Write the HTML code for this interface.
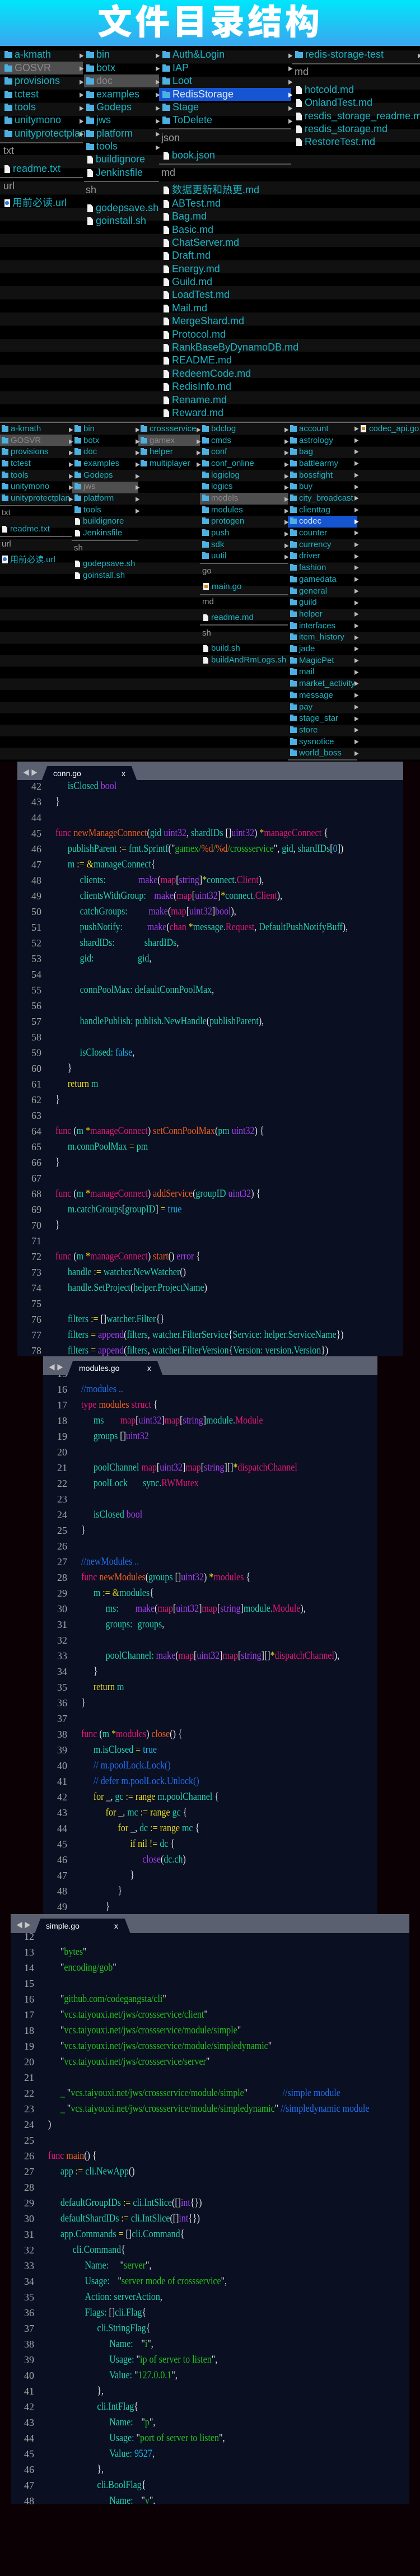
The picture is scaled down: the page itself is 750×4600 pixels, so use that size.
<!DOCTYPE html>
<html><head><meta charset="utf-8">
<style>
*{margin:0;padding:0;box-sizing:border-box}
body{width:750px;height:4600px;background:#0b0003;position:relative;overflow:hidden;font-family:"Liberation Sans","Noto Sans CJK SC",sans-serif}
.title{position:absolute;left:0;top:0;width:750px;height:82px;background:linear-gradient(#00e6fc,#3aa6ee);text-align:center;color:#fff;font:900 62px/82px "Liberation Sans","Noto Sans CJK SC",sans-serif;letter-spacing:5px}
.sec{position:absolute;left:0;width:750px;background:#000;overflow:hidden}
.stripe{position:absolute;left:0;width:750px}
.it{position:absolute;white-space:nowrap;color:#19b3c4}
.s1 .it{height:23px;line-height:23px;font-size:18px}
.s2 .it{height:20px;line-height:20px;font-size:15px}
.hd{color:#9a9a9a !important}
.fd{display:inline-block;width:14px;height:11px;background:#4eb0e0;margin-right:4px;vertical-align:-1px;position:relative}
.fd:before{content:"";position:absolute;left:0;top:-2px;width:6px;height:2px;background:#4eb0e0}
.s2 .fd{width:12px;height:10px}
.fi{display:inline-block;width:10px;height:14px;background:#f2f2f2;margin-right:5px;vertical-align:-2px;clip-path:polygon(0 0,65% 0,100% 30%,100% 100%,0 100%)}
.s2 .fi{width:9px;height:12px}
.ur{display:inline-block;width:10px;height:14px;background:#f2f2f2;margin-right:4px;vertical-align:-2px;position:relative}
.ur:after{content:"";position:absolute;left:1px;top:3px;width:7px;height:7px;border-radius:50%;background:#2a7ae0}
.go{display:inline-block;width:10px;height:13px;background:#f2f2f2;margin-right:5px;vertical-align:-2px;position:relative}
.go:after{content:"";position:absolute;left:2px;top:4px;width:6px;height:5px;background:#d08a20}
.ar{position:absolute;color:#bbb;font-size:9px}
.sep{position:absolute;height:2px;background:#5a5a5a}
.sel{position:absolute;background:#4e4e4e}
.selb{position:absolute;background:#1655d2}
.ed{position:absolute;background:#0a0f22;overflow:hidden}
.tb{position:absolute;left:0;top:0;width:100%;background:#5b6071;z-index:3}
.tab{position:absolute;left:43px;top:8px;width:171px;height:27px;background:#0a0f22;clip-path:polygon(6% 0,94% 0,100% 100%,0 100%)}
.tabt{position:absolute;top:11px;color:#fff;font:14px/20px "Liberation Sans",sans-serif;z-index:4}
.nav{position:absolute;left:10px;top:11px;color:#c8c8c8;font-size:12px;letter-spacing:2px;z-index:4}
.ln{position:absolute;text-align:right;color:#a4a4a4;font:18px/28px "Liberation Serif",serif}
.ln div{height:28px}
.code{position:absolute;width:1100px;transform:scaleX(.84);transform-origin:0 0;font:19px/28px "Liberation Serif",serif;color:#22d3b0;white-space:normal}
.code div{height:28px;white-space:pre}
.i1{padding-left:26px}.i2{padding-left:52px}.i3{padding-left:78px}.i4{padding-left:104px}.i5{padding-left:130px}
.kw{display:inline-block}
.k{color:#e8177c}.f{color:#f25f1c}.t{color:#a63ef2}.v{color:#22d3b0}.y{color:#e6dc1e}.s{color:#24c41c}.c{color:#1f6ff0}.w{color:#e2e2e2}.n{color:#1ab6ee}
</style></head><body>

<div class="title">文件目录结构</div>

<!-- SECTION 1 -->
<div class="sec s1" style="top:82px;height:672px;border-top:4px solid #000">
<div class="stripe" style="top:4px;height:668px;background:repeating-linear-gradient(#111 0 23.4px,#000 23.4px 46.8px)"></div>
</div>
<div class="s1">
<div class="sel" style="left:0;top:110px;width:148px;height:23px"></div>
<div class="sel" style="left:150px;top:133px;width:134px;height:23px"></div>
<div class="selb" style="left:284px;top:157px;width:236px;height:23px"></div>

<div class="it" style="left:8px;top:86px"><i class="fd"></i>a-kmath</div>
<div class="it" style="left:8px;top:110px;color:#8a8a8a"><i class="fd"></i>GOSVR</div>
<div class="it" style="left:8px;top:133px"><i class="fd"></i>provisions</div>
<div class="it" style="left:8px;top:157px"><i class="fd"></i>tctest</div>
<div class="it" style="left:8px;top:180px"><i class="fd"></i>tools</div>
<div class="it" style="left:8px;top:203px"><i class="fd"></i>unitymono</div>
<div class="it" style="left:8px;top:227px"><i class="fd"></i>unityprotectplan</div>
<div class="sep" style="left:0;top:254px;width:148px"></div>
<div class="it hd" style="left:6px;top:258px">txt</div>
<div class="it" style="left:8px;top:290px"><i class="fi"></i>readme.txt</div>
<div class="sep" style="left:0;top:316px;width:148px"></div>
<div class="it hd" style="left:6px;top:321px">url</div>
<div class="it" style="left:8px;top:351px"><i class="ur"></i>用前必读.url</div>
<div class="ar" style="left:141px;top:93px">▶</div><div class="ar" style="left:141px;top:116px">▶</div><div class="ar" style="left:141px;top:140px">▶</div><div class="ar" style="left:141px;top:163px">▶</div><div class="ar" style="left:141px;top:187px">▶</div><div class="ar" style="left:141px;top:210px">▶</div><div class="ar" style="left:141px;top:233px">▶</div>

<div class="it" style="left:154px;top:86px"><i class="fd"></i>bin</div>
<div class="it" style="left:154px;top:110px"><i class="fd"></i>botx</div>
<div class="it" style="left:154px;top:133px;color:#8a8a8a"><i class="fd"></i>doc</div>
<div class="it" style="left:154px;top:157px"><i class="fd"></i>examples</div>
<div class="it" style="left:154px;top:180px"><i class="fd"></i>Godeps</div>
<div class="it" style="left:154px;top:203px"><i class="fd"></i>jws</div>
<div class="it" style="left:154px;top:227px"><i class="fd"></i>platform</div>
<div class="it" style="left:154px;top:250px"><i class="fd"></i>tools</div>
<div class="it" style="left:156px;top:273px"><i class="fi"></i>buildignore</div>
<div class="it" style="left:156px;top:297px"><i class="fi"></i>Jenkinsfile</div>
<div class="sep" style="left:150px;top:323px;width:134px"></div>
<div class="it hd" style="left:153px;top:328px">sh</div>
<div class="it" style="left:156px;top:360px"><i class="fi"></i>godepsave.sh</div>
<div class="it" style="left:156px;top:383px"><i class="fi"></i>goinstall.sh</div>
<div class="ar" style="left:277px;top:93px">▶</div><div class="ar" style="left:277px;top:116px">▶</div><div class="ar" style="left:277px;top:140px">▶</div><div class="ar" style="left:277px;top:163px">▶</div><div class="ar" style="left:277px;top:187px">▶</div><div class="ar" style="left:277px;top:210px">▶</div><div class="ar" style="left:277px;top:233px">▶</div><div class="ar" style="left:277px;top:257px">▶</div>

<div class="it" style="left:290px;top:86px"><i class="fd"></i>Auth&amp;Login</div>
<div class="it" style="left:290px;top:110px"><i class="fd"></i>IAP</div>
<div class="it" style="left:290px;top:133px"><i class="fd"></i>Loot</div>
<div class="it" style="left:290px;top:157px;color:#dceaf2"><i class="fd"></i>RedisStorage</div>
<div class="it" style="left:290px;top:180px"><i class="fd"></i>Stage</div>
<div class="it" style="left:290px;top:203px"><i class="fd"></i>ToDelete</div>
<div class="sep" style="left:284px;top:229px;width:236px"></div>
<div class="it hd" style="left:288px;top:235px">json</div>
<div class="it" style="left:292px;top:266px"><i class="fi"></i>book.json</div>
<div class="sep" style="left:284px;top:292px;width:236px"></div>
<div class="it hd" style="left:288px;top:297px">md</div>
<div class="it" style="left:292px;top:328px"><i class="fi"></i>数据更新和热更.md</div>
<div class="it" style="left:292px;top:352px"><i class="fi"></i>ABTest.md</div>
<div class="it" style="left:292px;top:375px"><i class="fi"></i>Bag.md</div>
<div class="it" style="left:292px;top:399px"><i class="fi"></i>Basic.md</div>
<div class="it" style="left:292px;top:422px"><i class="fi"></i>ChatServer.md</div>
<div class="it" style="left:292px;top:445px"><i class="fi"></i>Draft.md</div>
<div class="it" style="left:292px;top:469px"><i class="fi"></i>Energy.md</div>
<div class="it" style="left:292px;top:492px"><i class="fi"></i>Guild.md</div>
<div class="it" style="left:292px;top:515px"><i class="fi"></i>LoadTest.md</div>
<div class="it" style="left:292px;top:539px"><i class="fi"></i>Mail.md</div>
<div class="it" style="left:292px;top:562px"><i class="fi"></i>MergeShard.md</div>
<div class="it" style="left:292px;top:586px"><i class="fi"></i>Protocol.md</div>
<div class="it" style="left:292px;top:609px"><i class="fi"></i>RankBaseByDynamoDB.md</div>
<div class="it" style="left:292px;top:632px"><i class="fi"></i>README.md</div>
<div class="it" style="left:292px;top:656px"><i class="fi"></i>RedeemCode.md</div>
<div class="it" style="left:292px;top:679px"><i class="fi"></i>RedisInfo.md</div>
<div class="it" style="left:292px;top:703px"><i class="fi"></i>Rename.md</div>
<div class="it" style="left:292px;top:726px"><i class="fi"></i>Reward.md</div>
<div class="ar" style="left:514px;top:93px">▶</div><div class="ar" style="left:514px;top:116px">▶</div><div class="ar" style="left:514px;top:140px">▶</div><div class="ar" style="left:514px;top:163px;color:#fff">▶</div><div class="ar" style="left:514px;top:187px">▶</div><div class="ar" style="left:514px;top:210px">▶</div>

<div class="it" style="left:527px;top:86px"><i class="fd"></i>redis-storage-test</div>
<div class="ar" style="left:745px;top:93px">▶</div>
<div class="sep" style="left:521px;top:113px;width:229px"></div>
<div class="it hd" style="left:526px;top:117px">md</div>
<div class="it" style="left:529px;top:149px"><i class="fi"></i>hotcold.md</div>
<div class="it" style="left:529px;top:172px"><i class="fi"></i>OnlandTest.md</div>
<div class="it" style="left:529px;top:196px"><i class="fi"></i>resdis_storage_readme.md</div>
<div class="it" style="left:529px;top:219px"><i class="fi"></i>resdis_storage.md</div>
<div class="it" style="left:529px;top:242px"><i class="fi"></i>RestoreTest.md</div>
</div>

<!-- SECTION 2 -->
<div class="sec s2" style="top:753px;height:607px;border-top:2px solid #6a6a6a">
<div class="stripe" style="top:1px;height:606px;background:repeating-linear-gradient(#111 0 20.7px,#000 20.7px 41.4px)"></div>
</div>
<div class="s2">
<div class="sel" style="left:0;top:776px;width:128px;height:21px"></div>
<div class="sel" style="left:247px;top:776px;width:110px;height:21px"></div>
<div class="sel" style="left:128px;top:860px;width:119px;height:21px"></div>
<div class="sel" style="left:357px;top:880px;width:157px;height:21px"></div>
<div class="selb" style="left:514px;top:921px;width:124px;height:21px"></div>

<div class="it" style="left:3px;top:756px"><i class="fd"></i>a-kmath</div>
<div class="it" style="left:3px;top:777px;color:#8a8a8a"><i class="fd"></i>GOSVR</div>
<div class="it" style="left:3px;top:797px"><i class="fd"></i>provisions</div>
<div class="it" style="left:3px;top:818px"><i class="fd"></i>tctest</div>
<div class="it" style="left:3px;top:839px"><i class="fd"></i>tools</div>
<div class="it" style="left:3px;top:859px"><i class="fd"></i>unitymono</div>
<div class="it" style="left:3px;top:880px"><i class="fd"></i>unityprotectplan</div>
<div class="sep" style="left:0;top:902px;width:128px"></div>
<div class="it hd" style="left:3px;top:906px">txt</div>
<div class="it" style="left:4px;top:935px"><i class="fi"></i>readme.txt</div>
<div class="sep" style="left:0;top:957px;width:128px"></div>
<div class="it hd" style="left:3px;top:962px">url</div>
<div class="it" style="left:4px;top:990px"><i class="ur"></i>用前必读.url</div>
<div class="ar" style="left:122px;top:761px">▶</div><div class="ar" style="left:122px;top:782px">▶</div><div class="ar" style="left:122px;top:802px">▶</div><div class="ar" style="left:122px;top:823px">▶</div><div class="ar" style="left:122px;top:844px">▶</div><div class="ar" style="left:122px;top:864px">▶</div><div class="ar" style="left:122px;top:885px">▶</div>

<div class="it" style="left:133px;top:756px"><i class="fd"></i>bin</div>
<div class="it" style="left:133px;top:777px"><i class="fd"></i>botx</div>
<div class="it" style="left:133px;top:797px"><i class="fd"></i>doc</div>
<div class="it" style="left:133px;top:818px"><i class="fd"></i>examples</div>
<div class="it" style="left:133px;top:839px"><i class="fd"></i>Godeps</div>
<div class="it" style="left:133px;top:859px;color:#8a8a8a"><i class="fd"></i>jws</div>
<div class="it" style="left:133px;top:880px"><i class="fd"></i>platform</div>
<div class="it" style="left:133px;top:901px"><i class="fd"></i>tools</div>
<div class="it" style="left:134px;top:921px"><i class="fi"></i>buildignore</div>
<div class="it" style="left:134px;top:942px"><i class="fi"></i>Jenkinsfile</div>
<div class="sep" style="left:128px;top:964px;width:119px"></div>
<div class="it hd" style="left:132px;top:969px">sh</div>
<div class="it" style="left:134px;top:997px"><i class="fi"></i>godepsave.sh</div>
<div class="it" style="left:134px;top:1018px"><i class="fi"></i>goinstall.sh</div>
<div class="ar" style="left:241px;top:761px">▶</div><div class="ar" style="left:241px;top:782px">▶</div><div class="ar" style="left:241px;top:802px">▶</div><div class="ar" style="left:241px;top:823px">▶</div><div class="ar" style="left:241px;top:844px">▶</div><div class="ar" style="left:241px;top:864px">▶</div><div class="ar" style="left:241px;top:885px">▶</div><div class="ar" style="left:241px;top:906px">▶</div>

<div class="it" style="left:251px;top:756px"><i class="fd"></i>crossservice</div>
<div class="it" style="left:251px;top:777px;color:#8a8a8a"><i class="fd"></i>gamex</div>
<div class="it" style="left:251px;top:797px"><i class="fd"></i>helper</div>
<div class="it" style="left:251px;top:818px"><i class="fd"></i>multiplayer</div>
<div class="ar" style="left:350px;top:761px">▶</div><div class="ar" style="left:350px;top:782px">▶</div><div class="ar" style="left:350px;top:802px">▶</div><div class="ar" style="left:350px;top:823px">▶</div>

<div class="it" style="left:361px;top:756px"><i class="fd"></i>bdclog</div>
<div class="it" style="left:361px;top:777px"><i class="fd"></i>cmds</div>
<div class="it" style="left:361px;top:797px"><i class="fd"></i>conf</div>
<div class="it" style="left:361px;top:818px"><i class="fd"></i>conf_online</div>
<div class="it" style="left:361px;top:839px"><i class="fd"></i>logiclog</div>
<div class="it" style="left:361px;top:859px"><i class="fd"></i>logics</div>
<div class="it" style="left:361px;top:880px;color:#8a8a8a"><i class="fd"></i>models</div>
<div class="it" style="left:361px;top:901px"><i class="fd"></i>modules</div>
<div class="it" style="left:361px;top:921px"><i class="fd"></i>protogen</div>
<div class="it" style="left:361px;top:942px"><i class="fd"></i>push</div>
<div class="it" style="left:361px;top:963px"><i class="fd"></i>sdk</div>
<div class="it" style="left:361px;top:983px"><i class="fd"></i>uutil</div>
<div class="sep" style="left:357px;top:1005px;width:157px"></div>
<div class="it hd" style="left:361px;top:1010px">go</div>
<div class="it" style="left:363px;top:1038px"><i class="go"></i>main.go</div>
<div class="sep" style="left:357px;top:1061px;width:157px"></div>
<div class="it hd" style="left:361px;top:1065px">md</div>
<div class="it" style="left:363px;top:1093px"><i class="fi"></i>readme.md</div>
<div class="sep" style="left:357px;top:1115px;width:157px"></div>
<div class="it hd" style="left:361px;top:1121px">sh</div>
<div class="it" style="left:363px;top:1148px"><i class="fi"></i>build.sh</div>
<div class="it" style="left:363px;top:1169px"><i class="fi"></i>buildAndRmLogs.sh</div>
<div class="ar" style="left:507px;top:761px">▶</div><div class="ar" style="left:507px;top:782px">▶</div><div class="ar" style="left:507px;top:802px">▶</div><div class="ar" style="left:507px;top:823px">▶</div><div class="ar" style="left:507px;top:844px">▶</div><div class="ar" style="left:507px;top:864px">▶</div><div class="ar" style="left:507px;top:885px">▶</div><div class="ar" style="left:507px;top:906px">▶</div><div class="ar" style="left:507px;top:926px">▶</div><div class="ar" style="left:507px;top:947px">▶</div><div class="ar" style="left:507px;top:968px">▶</div><div class="ar" style="left:507px;top:988px">▶</div>

<div class="it" style="left:518px;top:756px"><i class="fd"></i>account</div>
<div class="it" style="left:518px;top:777px"><i class="fd"></i>astrology</div>
<div class="it" style="left:518px;top:797px"><i class="fd"></i>bag</div>
<div class="it" style="left:518px;top:818px"><i class="fd"></i>battlearmy</div>
<div class="it" style="left:518px;top:839px"><i class="fd"></i>bossfight</div>
<div class="it" style="left:518px;top:859px"><i class="fd"></i>buy</div>
<div class="it" style="left:518px;top:880px"><i class="fd"></i>city_broadcast</div>
<div class="it" style="left:518px;top:901px"><i class="fd"></i>clienttag</div>
<div class="it" style="left:518px;top:921px;color:#dceaf2"><i class="fd"></i>codec</div>
<div class="it" style="left:518px;top:942px"><i class="fd"></i>counter</div>
<div class="it" style="left:518px;top:963px"><i class="fd"></i>currency</div>
<div class="it" style="left:518px;top:983px"><i class="fd"></i>driver</div>
<div class="it" style="left:518px;top:1004px"><i class="fd"></i>fashion</div>
<div class="it" style="left:518px;top:1025px"><i class="fd"></i>gamedata</div>
<div class="it" style="left:518px;top:1046px"><i class="fd"></i>general</div>
<div class="it" style="left:518px;top:1066px"><i class="fd"></i>guild</div>
<div class="it" style="left:518px;top:1087px"><i class="fd"></i>helper</div>
<div class="it" style="left:518px;top:1108px"><i class="fd"></i>interfaces</div>
<div class="it" style="left:518px;top:1128px"><i class="fd"></i>item_history</div>
<div class="it" style="left:518px;top:1149px"><i class="fd"></i>jade</div>
<div class="it" style="left:518px;top:1170px"><i class="fd"></i>MagicPet</div>
<div class="it" style="left:518px;top:1190px"><i class="fd"></i>mail</div>
<div class="it" style="left:518px;top:1211px"><i class="fd"></i>market_activity</div>
<div class="it" style="left:518px;top:1232px"><i class="fd"></i>message</div>
<div class="it" style="left:518px;top:1253px"><i class="fd"></i>pay</div>
<div class="it" style="left:518px;top:1273px"><i class="fd"></i>stage_star</div>
<div class="it" style="left:518px;top:1294px"><i class="fd"></i>store</div>
<div class="it" style="left:518px;top:1315px"><i class="fd"></i>sysnotice</div>
<div class="it" style="left:518px;top:1335px"><i class="fd"></i>world_boss</div>
<div class="sep" style="left:514px;top:1356px;width:124px"></div>
<div style="position:absolute;left:632px;top:756px;color:#bbb;font-size:9px;line-height:20.7px">▶<br>▶<br>▶<br>▶<br>▶<br>▶<br>▶<br>▶<br><span style="color:#fff">▶</span><br>▶<br>▶<br>▶<br>▶<br>▶<br>▶<br>▶<br>▶<br>▶<br>▶<br>▶<br>▶<br>▶<br>▶<br>▶<br>▶<br>▶<br>▶<br>▶<br>▶</div>

<div class="it" style="left:644px;top:756px"><i class="go"></i>codec_api.go</div>
</div>

<!-- EDITOR 1 -->
<div class="ed" style="left:31px;top:1360px;width:689px;height:1062px">
<div class="tb" style="height:33px"></div><div class="tab" style="z-index:3"></div>
<div class="nav">◀▶</div><div class="tabt" style="left:64px">conn.go</div><div class="tabt" style="left:186px">x</div>
<div class="ln" style="left:0;width:43px;top:30px"><div>42</div><div>43</div><div>44</div><div>45</div><div>46</div><div>47</div><div>48</div><div>49</div><div>50</div><div>51</div><div>52</div><div>53</div><div>54</div><div>55</div><div>56</div><div>57</div><div>58</div><div>59</div><div>60</div><div>61</div><div>62</div><div>63</div><div>64</div><div>65</div><div>66</div><div>67</div><div>68</div><div>69</div><div>70</div><div>71</div><div>72</div><div>73</div><div>74</div><div>75</div><div>76</div><div>77</div><div>78</div></div>
<div class="code" style="left:68px;top:30px">
<div class="i1">isClosed <span class="t">bool</span></div>
<div class="w">}</div>
<div></div>
<div><span class="k">func</span> <span class="f">newManageConnect</span><span class="w">(</span>gid <span class="t">uint32</span><span class="w">,</span> shardIDs <span class="w">[]</span><span class="t">uint32</span><span class="w">)</span> <span class="y">*</span><span class="k">manageConnect</span> <span class="w">{</span></div>
<div class="i1">publishParent <span class="y">:=</span> fmt.Sprintf<span class="w">("</span><span class="s">gamex/</span><span class="f">%d</span><span class="s">/</span><span class="f">%d</span><span class="s">/crossservice</span><span class="w">"</span><span class="w">,</span> gid<span class="w">,</span> shardIDs<span class="w">[</span><span class="n">0</span><span class="w">])</span></div>
<div class="i1">m <span class="y">:= &amp;</span>manageConnect<span class="w">{</span></div>
<div class="i2"><span class="kw" style="width:124px">clients:</span><span class="t">make</span><span class="w">(</span><span class="k">map</span><span class="w">[</span><span class="t">string</span><span class="w">]</span><span class="y">*</span>connect.<span class="k">Client</span><span class="w">),</span></div>
<div class="i2"><span class="kw" style="width:158px">clientsWithGroup:</span><span class="t">make</span><span class="w">(</span><span class="k">map</span><span class="w">[</span><span class="t">uint32</span><span class="w">]</span><span class="y">*</span>connect.<span class="k">Client</span><span class="w">),</span></div>
<div class="i2"><span class="kw" style="width:146px">catchGroups:</span><span class="t">make</span><span class="w">(</span><span class="k">map</span><span class="w">[</span><span class="t">uint32</span><span class="w">]</span><span class="t">bool</span><span class="w">),</span></div>
<div class="i2"><span class="kw" style="width:143px">pushNotify:</span><span class="t">make</span><span class="w">(</span><span class="k">chan</span> <span class="y">*</span>message.<span class="k">Request</span><span class="w">,</span> DefaultPushNotifyBuff<span class="w">),</span></div>
<div class="i2"><span class="kw" style="width:137px">shardIDs:</span>shardIDs<span class="w">,</span></div>
<div class="i2"><span class="kw" style="width:123px">gid:</span>gid<span class="w">,</span></div>
<div></div>
<div class="i2">connPoolMax: defaultConnPoolMax<span class="w">,</span></div>
<div></div>
<div class="i2">handlePublish: publish.NewHandle<span class="w">(</span>publishParent<span class="w">),</span></div>
<div></div>
<div class="i2">isClosed: <span class="n">false</span><span class="w">,</span></div>
<div class="i1 w">}</div>
<div class="i1"><span class="y">return</span> m</div>
<div class="w">}</div>
<div></div>
<div><span class="k">func</span> <span class="w">(</span>m <span class="y">*</span><span class="k">manageConnect</span><span class="w">)</span> <span class="f">setConnPoolMax</span><span class="w">(</span>pm <span class="t">uint32</span><span class="w">) {</span></div>
<div class="i1">m.connPoolMax <span class="y">=</span> pm</div>
<div class="w">}</div>
<div></div>
<div><span class="k">func</span> <span class="w">(</span>m <span class="y">*</span><span class="k">manageConnect</span><span class="w">)</span> <span class="f">addService</span><span class="w">(</span>groupID <span class="t">uint32</span><span class="w">) {</span></div>
<div class="i1">m.catchGroups<span class="w">[</span>groupID<span class="w">]</span> <span class="y">=</span> <span class="n">true</span></div>
<div class="w">}</div>
<div></div>
<div><span class="k">func</span> <span class="w">(</span>m <span class="y">*</span><span class="k">manageConnect</span><span class="w">)</span> <span class="f">start</span><span class="w">()</span> <span class="t">error</span> <span class="w">{</span></div>
<div class="i1">handle <span class="y">:=</span> watcher.NewWatcher<span class="w">()</span></div>
<div class="i1">handle.SetProject<span class="w">(</span>helper.ProjectName<span class="w">)</span></div>
<div></div>
<div class="i1">filters <span class="y">:=</span> <span class="w">[]</span>watcher.Filter<span class="w">{}</span></div>
<div class="i1">filters <span class="y">=</span> <span class="t">append</span><span class="w">(</span>filters<span class="w">,</span> watcher.FilterService<span class="w">{</span>Service: helper.ServiceName<span class="w">})</span></div>
<div class="i1">filters <span class="y">=</span> <span class="t">append</span><span class="w">(</span>filters<span class="w">,</span> watcher.FilterVersion<span class="w">{</span>Version: version.Version<span class="w">})</span></div>
</div>
</div>

<!-- EDITOR 2 -->
<div class="ed" style="left:77px;top:2422px;width:597px;height:996px">
<div class="tb" style="height:33px"></div><div class="tab" style="z-index:3"></div>
<div class="nav">◀▶</div><div class="tabt" style="left:64px">modules.go</div><div class="tabt" style="left:186px">x</div>
<div class="ln" style="left:0;width:43px;top:17px"><div>15</div><div>16</div><div>17</div><div>18</div><div>19</div><div>20</div><div>21</div><div>22</div><div>23</div><div>24</div><div>25</div><div>26</div><div>27</div><div>28</div><div>29</div><div>30</div><div>31</div><div>32</div><div>33</div><div>34</div><div>35</div><div>36</div><div>37</div><div>38</div><div>39</div><div>40</div><div>41</div><div>42</div><div>43</div><div>44</div><div>45</div><div>46</div><div>47</div><div>48</div><div>49</div></div>
<div class="code" style="left:68px;top:17px">
<div></div>
<div class="c">//modules ..</div>
<div><span class="k">type</span> <span class="f">modules</span> <span class="k">struct</span> <span class="w">{</span></div>
<div class="i1"><span class="kw" style="width:57px">ms</span><span class="k">map</span><span class="w">[</span><span class="t">uint32</span><span class="w">]</span><span class="k">map</span><span class="w">[</span><span class="t">string</span><span class="w">]</span>module.<span class="k">Module</span></div>
<div class="i1">groups <span class="w">[]</span><span class="t">uint32</span></div>
<div></div>
<div class="i1">poolChannel <span class="k">map</span><span class="w">[</span><span class="t">uint32</span><span class="w">]</span><span class="k">map</span><span class="w">[</span><span class="t">string</span><span class="w">][]</span><span class="y">*</span><span class="k">dispatchChannel</span></div>
<div class="i1"><span class="kw" style="width:105px">poolLock</span>sync.<span class="k">RWMutex</span></div>
<div></div>
<div class="i1">isClosed <span class="t">bool</span></div>
<div class="w">}</div>
<div></div>
<div class="c">//newModules ..</div>
<div><span class="k">func</span> <span class="f">newModules</span><span class="w">(</span>groups <span class="w">[]</span><span class="t">uint32</span><span class="w">)</span> <span class="y">*</span><span class="k">modules</span> <span class="w">{</span></div>
<div class="i1">m <span class="y">:= &amp;</span>modules<span class="w">{</span></div>
<div class="i2"><span class="kw" style="width:63px">ms:</span><span class="t">make</span><span class="w">(</span><span class="k">map</span><span class="w">[</span><span class="t">uint32</span><span class="w">]</span><span class="k">map</span><span class="w">[</span><span class="t">string</span><span class="w">]</span>module.<span class="k">Module</span><span class="w">),</span></div>
<div class="i2"><span class="kw" style="width:68px">groups:</span>groups<span class="w">,</span></div>
<div></div>
<div class="i2">poolChannel: <span class="t">make</span><span class="w">(</span><span class="k">map</span><span class="w">[</span><span class="t">uint32</span><span class="w">]</span><span class="k">map</span><span class="w">[</span><span class="t">string</span><span class="w">][]</span><span class="y">*</span><span class="k">dispatchChannel</span><span class="w">),</span></div>
<div class="i1 w">}</div>
<div class="i1"><span class="y">return</span> m</div>
<div class="w">}</div>
<div></div>
<div><span class="k">func</span> <span class="w">(</span>m <span class="y">*</span><span class="k">modules</span><span class="w">)</span> <span class="f">close</span><span class="w">() {</span></div>
<div class="i1">m.isClosed <span class="y">=</span> <span class="n">true</span></div>
<div class="i1 c">// m.poolLock.Lock()</div>
<div class="i1 c">// defer m.poolLock.Unlock()</div>
<div class="i1"><span class="y">for</span> <span class="w">_,</span> gc <span class="y">:= range</span> m.poolChannel <span class="w">{</span></div>
<div class="i2"><span class="y">for</span> <span class="w">_,</span> mc <span class="y">:= range</span> gc <span class="w">{</span></div>
<div class="i3"><span class="y">for</span> <span class="w">_,</span> dc <span class="y">:= range</span> mc <span class="w">{</span></div>
<div class="i4"><span class="y">if nil !=</span> dc <span class="w">{</span></div>
<div class="i5"><span class="t">close</span><span class="w">(</span>dc.ch<span class="w">)</span></div>
<div class="i4 w">}</div>
<div class="i3 w">}</div>
<div class="i2 w">}</div>
</div>
</div>

<!-- EDITOR 3 -->
<div class="ed" style="left:19px;top:3418px;width:712px;height:1054px">
<div class="tb" style="height:34px"></div><div class="tab" style="z-index:3"></div>
<div class="nav">◀▶</div><div class="tabt" style="left:63px">simple.go</div><div class="tabt" style="left:185px">x</div>
<div class="ln" style="left:0;width:42px;top:26px"><div>12</div><div>13</div><div>14</div><div>15</div><div>16</div><div>17</div><div>18</div><div>19</div><div>20</div><div>21</div><div>22</div><div>23</div><div>24</div><div>25</div><div>26</div><div>27</div><div>28</div><div>29</div><div>30</div><div>31</div><div>32</div><div>33</div><div>34</div><div>35</div><div>36</div><div>37</div><div>38</div><div>39</div><div>40</div><div>41</div><div>42</div><div>43</div><div>44</div><div>45</div><div>46</div><div>47</div><div>48</div></div>
<div class="code" style="left:67px;top:26px">
<div></div>
<div class="i1"><span class="w">"</span><span class="s">bytes</span><span class="w">"</span></div>
<div class="i1"><span class="w">"</span><span class="s">encoding/gob</span><span class="w">"</span></div>
<div></div>
<div class="i1"><span class="w">"</span><span class="s">github.com/codegangsta/cli</span><span class="w">"</span></div>
<div class="i1"><span class="w">"</span><span class="s">vcs.taiyouxi.net/jws/crossservice/client</span><span class="w">"</span></div>
<div class="i1"><span class="w">"</span><span class="s">vcs.taiyouxi.net/jws/crossservice/module/simple</span><span class="w">"</span></div>
<div class="i1"><span class="w">"</span><span class="s">vcs.taiyouxi.net/jws/crossservice/module/simpledynamic</span><span class="w">"</span></div>
<div class="i1"><span class="w">"</span><span class="s">vcs.taiyouxi.net/jws/crossservice/server</span><span class="w">"</span></div>
<div></div>
<div class="i1"><span class="s">_</span> <span class="kw" style="width:458px"><span class="w">"</span><span class="s">vcs.taiyouxi.net/jws/crossservice/module/simple</span><span class="w">"</span></span><span class="c">//simple module</span></div>
<div class="i1"><span class="s">_</span> <span class="w">"</span><span class="s">vcs.taiyouxi.net/jws/crossservice/module/simpledynamic</span><span class="w">"</span> <span class="c">//simpledynamic module</span></div>
<div class="w">)</div>
<div></div>
<div><span class="k">func</span> <span class="f">main</span><span class="w">() {</span></div>
<div class="i1">app <span class="y">:=</span> cli.NewApp<span class="w">()</span></div>
<div></div>
<div class="i1">defaultGroupIDs <span class="y">:=</span> cli.IntSlice<span class="w">([]</span><span class="t">int</span><span class="w">{})</span></div>
<div class="i1">defaultShardIDs <span class="y">:=</span> cli.IntSlice<span class="w">([]</span><span class="t">int</span><span class="w">{})</span></div>
<div class="i1">app.Commands <span class="y">=</span> <span class="w">[]</span>cli.Command<span class="w">{</span></div>
<div class="i2">cli.Command<span class="w">{</span></div>
<div class="i3"><span class="kw" style="width:75px">Name:</span><span class="w">"</span><span class="s">server</span><span class="w">",</span></div>
<div class="i3"><span class="kw" style="width:70px">Usage:</span><span class="w">"</span><span class="s">server mode of crossservice</span><span class="w">",</span></div>
<div class="i3">Action: serverAction<span class="w">,</span></div>
<div class="i3">Flags: <span class="w">[]</span>cli.Flag<span class="w">{</span></div>
<div class="i4">cli.StringFlag<span class="w">{</span></div>
<div class="i5"><span class="kw" style="width:68px">Name:</span><span class="w">"</span><span class="s">i</span><span class="w">",</span></div>
<div class="i5">Usage: <span class="w">"</span><span class="s">ip of server to listen</span><span class="w">",</span></div>
<div class="i5">Value: <span class="w">"</span><span class="s">127.0.0.1</span><span class="w">",</span></div>
<div class="i4 w">},</div>
<div class="i4">cli.IntFlag<span class="w">{</span></div>
<div class="i5"><span class="kw" style="width:68px">Name:</span><span class="w">"</span><span class="s">p</span><span class="w">",</span></div>
<div class="i5">Usage: <span class="w">"</span><span class="s">port of server to listen</span><span class="w">",</span></div>
<div class="i5">Value: <span class="n">9527</span><span class="w">,</span></div>
<div class="i4 w">},</div>
<div class="i4">cli.BoolFlag<span class="w">{</span></div>
<div class="i5"><span class="kw" style="width:68px">Name:</span><span class="w">"</span><span class="s">v</span><span class="w">",</span></div>
</div>
</div>

</body></html>
